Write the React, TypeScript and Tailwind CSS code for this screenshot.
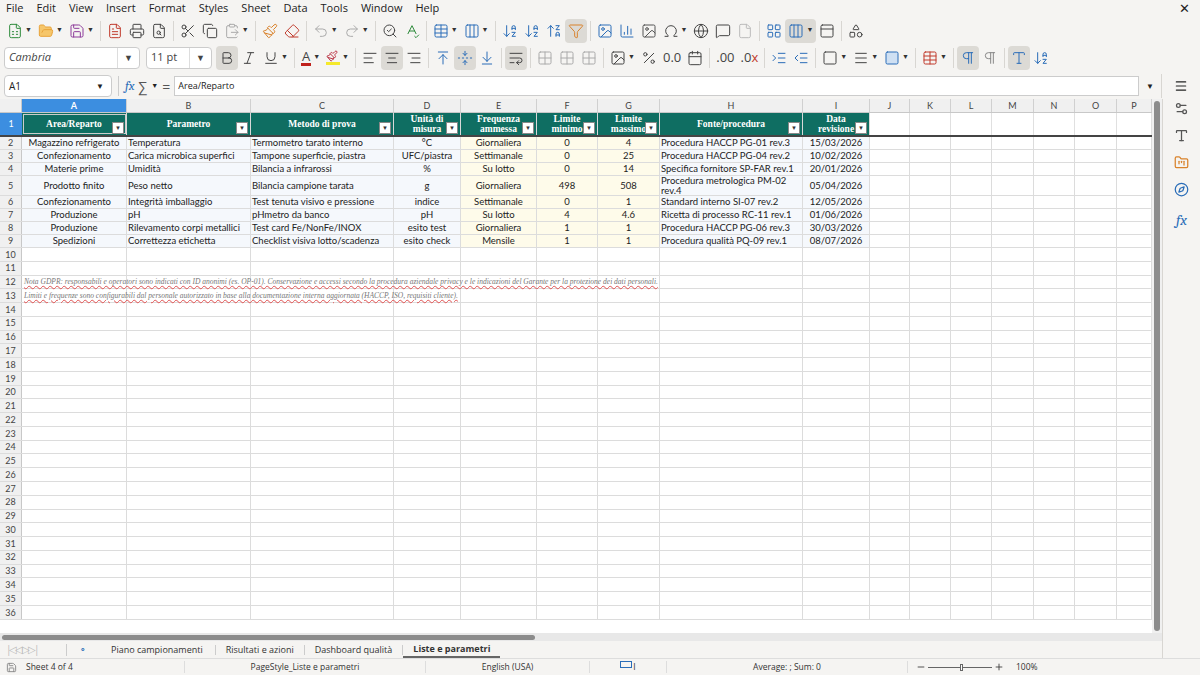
import React from "react";
import {
  FileSpreadsheet, FolderOpen, Save, FileText, Printer, FileSearch, Scissors, Copy, ClipboardPaste,
  Paintbrush, Eraser, Undo2, Redo2, SearchCheck, SpellCheck, Table, Columns3, ArrowDownAZ, ArrowUpZA,
  Filter, Image, BarChart3, Omega, Globe, MessageSquare, File, LayoutGrid, PanelTop, Shapes,
  Bold, Italic, Underline, AlignLeft, AlignCenter, AlignRight, ArrowUpToLine, FoldVertical, ArrowDownToLine,
  WrapText, Grid2x2, Percent, Calendar, IndentIncrease, IndentDecrease, Square, Menu, Settings2,
  Type, FolderKanban, Compass, ChevronDown, Pilcrow, Minus, Plus,
} from "lucide-react";

const COLS: [string, number][] = [
  ["A", 105], ["B", 124], ["C", 143], ["D", 67], ["E", 76], ["F", 61], ["G", 62], ["H", 143], ["I", 67],
  ["J", 40], ["K", 41], ["L", 41], ["M", 42], ["N", 41], ["O", 42], ["P", 35],
];

const HEAD = [
  ["Area/Reparto"], ["Parametro"], ["Metodo di prova"], ["Unità di", "misura"], ["Frequenza", "ammessa"],
  ["Limite", "minimo"], ["Limite", "massimo"], ["Fonte/procedura"], ["Data", "revisione"],
];

const DATA: { c: string[]; h: number }[] = [
  { c: ["Magazzino refrigerato", "Temperatura", "Termometro tarato interno", "°C", "Giornaliera", "0", "4", "Procedura HACCP PG-01 rev.3", "15/03/2026"], h: 14 },
  { c: ["Confezionamento", "Carica microbica superfici", "Tampone superficie, piastra", "UFC/piastra", "Settimanale", "0", "25", "Procedura HACCP PG-04 rev.2", "10/02/2026"], h: 14 },
  { c: ["Materie prime", "Umidità", "Bilancia a infrarossi", "%", "Su lotto", "0", "14", "Specifica fornitore SP-FAR rev.1", "20/01/2026"], h: 14 },
  { c: ["Prodotto finito", "Peso netto", "Bilancia campione tarata", "g", "Giornaliera", "498", "508", "Procedura metrologica PM-02 rev.4", "05/04/2026"], h: 21 },
  { c: ["Confezionamento", "Integrità imballaggio", "Test tenuta visivo e pressione", "indice", "Settimanale", "0", "1", "Standard interno SI-07 rev.2", "12/05/2026"], h: 14 },
  { c: ["Produzione", "pH", "pHmetro da banco", "pH", "Su lotto", "4", "4.6", "Ricetta di processo RC-11 rev.1", "01/06/2026"], h: 14 },
  { c: ["Produzione", "Rilevamento corpi metallici", "Test card Fe/NonFe/INOX", "esito test", "Giornaliera", "1", "1", "Procedura HACCP PG-06 rev.3", "30/03/2026"], h: 14 },
  { c: ["Spedizioni", "Correttezza etichetta", "Checklist visiva lotto/scadenza", "esito check", "Mensile", "1", "1", "Procedura qualità PQ-09 rev.1", "08/07/2026"], h: 14 },
];

const ui = { fontFamily: '"Open Sans", "Noto Sans", sans-serif' };
const cell = { fontFamily: '"Lato", "Liberation Sans", sans-serif' };

function Ic({ children, active, drop }: { children: React.ReactNode; active?: boolean; drop?: boolean }) {
  return (
    <div className={`flex items-center h-[24px] px-[3px] rounded ${active ? "bg-[#dcdad5]" : ""}`}>
      {children}
      {drop && <span className="ml-[2px] text-[7px] text-[#333]">▼</span>}
    </div>
  );
}
const Sep = () => <div className="w-px h-[20px] bg-[#d8d6d2] mx-[3px]" />;
const s = { size: 16, strokeWidth: 1.5 };

function DropBtn() {
  return <div className="w-[12px] h-[12px] bg-white border border-[#888] flex items-center justify-center text-[6px] text-[#333] shrink-0">▼</div>;
}

export default function App() {
  const alignOf = (i: number) => (i === 0 || i === 3 || i === 4 || i === 5 || i === 6 || i === 8 ? "justify-center text-center" : "justify-start");
  const bgOf = (i: number) => (i >= 4 && i <= 6 ? "bg-[#fefbea]" : "bg-[#f5f8fc]");
  const emptyRows = Array.from({ length: 27 }, (_, k) => k + 10);
  return (
    <div className="w-[1200px] h-[675px] bg-[#f5f4f2] flex flex-col overflow-hidden text-[#222]" style={ui}>
      {/* menu */}
      <div className="h-[17px] flex items-center gap-[13px] px-[6px] text-[11px]">
        {["File", "Edit", "View", "Insert", "Format", "Styles", "Sheet", "Data", "Tools", "Window", "Help"].map((m) => (
          <span key={m}>{m}</span>
        ))}
        <span className="ml-auto mr-[4px] text-[13px]">✕</span>
      </div>
      {/* toolbar 1 */}
      <div className="h-[27px] flex items-center px-[4px] text-[#444]">
        <Ic drop><FileSpreadsheet {...s} color="#2e8b3c" /></Ic>
        <Ic drop><FolderOpen {...s} color="#e8a33a" fill="#f6c66a" /></Ic>
        <Ic drop><Save {...s} color="#8c3a9a" /></Ic>
        <Sep />
        <Ic><FileText {...s} color="#c0392b" /></Ic>
        <Ic><Printer {...s} /></Ic>
        <Ic><FileSearch {...s} /></Ic>
        <Sep />
        <Ic><Scissors {...s} /></Ic>
        <Ic><Copy {...s} /></Ic>
        <Ic drop><ClipboardPaste {...s} color="#aaa" /></Ic>
        <Sep />
        <Ic><Paintbrush {...s} color="#d9822b" /></Ic>
        <Ic><Eraser {...s} color="#c0392b" /></Ic>
        <Sep />
        <Ic drop><Undo2 {...s} color="#aaa" /></Ic>
        <Ic drop><Redo2 {...s} color="#aaa" /></Ic>
        <Sep />
        <Ic><SearchCheck {...s} /></Ic>
        <Ic><SpellCheck {...s} color="#2e8b3c" /></Ic>
        <Sep />
        <Ic drop><Table {...s} color="#2a6db8" /></Ic>
        <Ic drop><Columns3 {...s} color="#2a6db8" /></Ic>
        <Sep />
        <Ic><ArrowDownAZ {...s} color="#2a6db8" /></Ic>
        <Ic><ArrowDownAZ {...s} color="#2a6db8" /></Ic>
        <Ic><ArrowUpZA {...s} color="#2a6db8" /></Ic>
        <Ic active><Filter {...s} color="#d9822b" /></Ic>
        <Sep />
        <Ic><Image {...s} color="#2a6db8" /></Ic>
        <Ic><BarChart3 {...s} color="#2a6db8" /></Ic>
        <Ic><Image {...s} color="#555" /></Ic>
        <Ic drop><Omega {...s} /></Ic>
        <Ic><Globe {...s} /></Ic>
        <Ic><MessageSquare {...s} /></Ic>
        <Ic><File {...s} color="#bbb" /></Ic>
        <Sep />
        <Ic><LayoutGrid {...s} color="#2a6db8" /></Ic>
        <Ic active drop><Columns3 {...s} color="#2a6db8" /></Ic>
        <Ic><PanelTop {...s} /></Ic>
        <Sep />
        <Ic><Shapes {...s} /></Ic>
      </div>
      {/* toolbar 2 */}
      <div className="h-[27px] flex items-center px-[4px] text-[#444]">
        <div className="w-[136px] h-[22px] bg-white border border-[#ccc] rounded-sm flex items-center text-[11px]">
          <span className="flex-1 px-[4px] italic">Cambria</span>
          <div className="w-[22px] h-full border-l border-[#ddd] flex items-center justify-center text-[9px]">▼</div>
        </div>
        <div className="w-[66px] h-[22px] ml-[6px] bg-white border border-[#ccc] rounded-sm flex items-center text-[11px]">
          <span className="flex-1 px-[4px]">11 pt</span>
          <div className="w-[22px] h-full border-l border-[#ddd] flex items-center justify-center text-[9px]">▼</div>
        </div>
        <div className="w-[4px]" />
        <Ic active><Bold {...s} /></Ic>
        <Ic><Italic {...s} /></Ic>
        <Ic drop><Underline {...s} /></Ic>
        <Sep />
        <Ic drop><span className="text-[13px] border-b-[3px] border-[#c0211c] leading-[14px] px-[1px]">A</span></Ic>
        <Ic drop><span className="w-[14px] h-[15px] border-b-[3px] border-[#f5e92b] flex items-center"><Paintbrush size={12} color="#b34" /></span></Ic>
        <Sep />
        <Ic><AlignLeft {...s} /></Ic>
        <Ic active><AlignCenter {...s} /></Ic>
        <Ic><AlignRight {...s} /></Ic>
        <Sep />
        <Ic><ArrowUpToLine {...s} color="#2a6db8" /></Ic>
        <Ic active><FoldVertical {...s} color="#2a6db8" /></Ic>
        <Ic><ArrowDownToLine {...s} color="#2a6db8" /></Ic>
        <Sep />
        <Ic active><WrapText {...s} /></Ic>
        <Sep />
        <Ic><Grid2x2 {...s} color="#aaa" /></Ic>
        <Ic><Grid2x2 {...s} color="#aaa" /></Ic>
        <Ic><Grid2x2 {...s} color="#aaa" /></Ic>
        <Sep />
        <Ic drop><Image {...s} /></Ic>
        <Ic><Percent {...s} /></Ic>
        <Ic><span className="text-[13px]">0.0</span></Ic>
        <Ic><Calendar {...s} /></Ic>
        <Sep />
        <Ic><span className="text-[13px]">.00</span></Ic>
        <Ic><span className="text-[13px]">.0<span className="text-[#c0392b]">x</span></span></Ic>
        <Sep />
        <Ic><IndentIncrease {...s} color="#2a6db8" /></Ic>
        <Ic><IndentDecrease {...s} color="#2a6db8" /></Ic>
        <Sep />
        <Ic drop><Square {...s} /></Ic>
        <Ic drop><Menu {...s} /></Ic>
        <Ic drop><Square {...s} color="#2a6db8" fill="#cfe0f3" /></Ic>
        <Sep />
        <Ic drop><Table {...s} color="#c0392b" /></Ic>
        <Sep />
        <Ic active><Pilcrow {...s} color="#2a6db8" /></Ic>
        <Ic><Pilcrow {...s} color="#888" /></Ic>
        <Sep />
        <Ic active><Type {...s} color="#2a6db8" /></Ic>
        <Ic><ArrowDownAZ {...s} color="#2a6db8" /></Ic>
      </div>
      {/* formula bar */}
      <div className="h-[28px] flex items-center px-[4px] gap-[4px] mt-[1px]">
        <div className="w-[108px] h-[22px] bg-white border border-[#ccc] rounded-sm flex items-center text-[10px]">
          <span className="flex-1 px-[4px]">A1</span>
          <div className="w-[22px] flex justify-center text-[8px]">▼</div>
        </div>
        <div className="w-px h-[20px] bg-[#ccc] mx-[2px]" />
        <span className="italic text-[#2a6db8] text-[13px] font-serif">fx</span>
        <span className="text-[14px] text-[#555]">∑</span><span className="text-[7px]">▼</span>
        <span className="text-[14px] text-[#555]">=</span>
        <div className="flex-1 h-[20px] bg-white border border-[#ccc] flex items-center px-[3px] text-[9px]">Area/Reparto</div>
        <span className="text-[8px] mx-[3px]">▼</span>
        <div className="w-px h-[24px] bg-[#d8d6d2]" />
        <div className="w-[30px] flex justify-center"><Menu size={14} /></div>
      </div>
      {/* main */}
      <div className="flex flex-1 min-h-0 mt-[-1px]">
        <div className="flex flex-col w-[1162px]">
          <div className="flex flex-1 min-h-0 bg-white">
            <div className="w-[1152px] overflow-hidden" style={cell}>
              {/* column headers */}
              <div className="flex h-[14px] bg-[#f0f0f0] border-b border-[#c8c8c8] text-[9px] text-[#444]">
                <div className="w-[22px] shrink-0 border-r border-[#c8c8c8]" />
                {COLS.map(([n, w], i) => (
                  <div key={n} style={{ width: w }} className={`shrink-0 flex items-center justify-center border-r border-[#d0d0d0] ${i === 0 ? "bg-[#3c8ee0] text-white font-bold" : ""}`}>{n}</div>
                ))}
              </div>
              {/* row 1 */}
              <div className="flex h-[24px] border-b-2 border-[#444]">
                <div className="w-[22px] shrink-0 bg-[#3c8ee0] text-white text-[9px] flex items-center justify-center">1</div>
                {COLS.map(([n, w], i) =>
                  i < 9 ? (
                    <div key={n} style={{ width: w, fontFamily: '"Liberation Serif", "DejaVu Serif", serif' }} className={`shrink-0 bg-[#0f6e62] text-white font-bold text-[9.5px] leading-[10px] flex items-center justify-center relative border-r border-[#d8d8d8] ${i === 0 ? "outline outline-1 outline-[#ccc] -outline-offset-2" : ""}`}>
                      <div className="text-center pb-[1px]">{HEAD[i].map((l) => <div key={l}>{l}</div>)}</div>
                      <div className="absolute right-[2px] bottom-[1px]"><DropBtn /></div>
                    </div>
                  ) : (
                    <div key={n} style={{ width: w }} className="shrink-0 border-r border-[#e0e0e0]" />
                  )
                )}
              </div>
              {DATA.map((r, ri) => (
                <div key={ri} className="flex border-b border-[#dcdcdc]" style={{ height: r.h - 1 }}>
                  <div className="w-[22px] shrink-0 bg-[#f0f0f0] border-r border-[#c8c8c8] text-[9px] text-[#444] flex items-center justify-center">{ri + 2}</div>
                  {COLS.map(([n, w], i) => (
                    <div key={n} style={{ width: w }} className={`shrink-0 border-r border-[#dcdcdc] flex items-center px-[1px] text-[9.5px] leading-[10px] overflow-hidden whitespace-nowrap ${i < 9 ? bgOf(i) + " " + alignOf(i) : ""}`}>
                      {i < 9 && (i === 7 && ri === 3 ? <span className="whitespace-normal">{r.c[i]}</span> : r.c[i])}
                    </div>
                  ))}
                </div>
              ))}
              {emptyRows.map((rn) => (
                <div key={rn} className="flex h-[13.77px] border-b border-[#dcdcdc] relative">
                  <div className="w-[22px] shrink-0 bg-[#f0f0f0] border-r border-[#c8c8c8] text-[9px] text-[#444] flex items-center justify-center">{rn}</div>
                  {COLS.map(([n, w]) => (
                    <div key={n} style={{ width: w }} className="shrink-0 border-r border-[#dcdcdc]" />
                  ))}
                  {(rn === 12 || rn === 13) && (
                    <div className="absolute left-[24px] top-0 h-full flex items-center italic text-[7.5px] text-[#777] whitespace-nowrap underline decoration-[#e05050] decoration-wavy" style={{ fontFamily: '"Liberation Serif", serif' }}>
                      {rn === 12
                        ? "Nota GDPR: responsabili e operatori sono indicati con ID anonimi (es. OP-01). Conservazione e accessi secondo la procedura aziendale privacy e le indicazioni del Garante per la protezione dei dati personali."
                        : "Limiti e frequenze sono configurabili dal personale autorizzato in base alla documentazione interna aggiornata (HACCP, ISO, requisiti cliente)."}
                    </div>
                  )}
                </div>
              ))}
            </div>
            <div className="w-[10px] bg-[#f0f0f0] flex justify-center pt-[2px]">
              <div className="w-[6px] h-[530px] bg-[#8c8c8c] rounded" />
            </div>
          </div>
          {/* h scroll */}
          <div className="h-[8px] bg-[#e8e8e8] flex items-center">
            <div className="ml-[2px] w-[533px] h-[5px] bg-[#8c8c8c] rounded" />
          </div>
          {/* tabs */}
          <div className="h-[17px] flex items-center text-[9px] text-[#333] bg-[#f5f4f2]">
            <span className="text-[#bbb] text-[10px] tracking-[-2px] w-[66px] pl-[6px]">|◁◁ ▷▷|</span>
            <div className="w-px h-[12px] bg-[#ccc]" />
            <span className="text-[#2a6db8] text-[9px] px-[12px]">⚬</span>
            <span className="px-[12px]">Piano campionamenti</span>
            <div className="w-px h-[10px] bg-[#ccc]" />
            <span className="px-[10px]">Risultati e azioni</span>
            <div className="w-px h-[10px] bg-[#ccc]" />
            <span className="px-[10px]">Dashboard qualità</span>
            <div className="w-px h-[10px] bg-[#ccc]" />
            <span className="px-[10px] font-bold border-b-2 border-[#666] h-full flex items-center">Liste e parametri</span>
          </div>
        </div>
        {/* sidebar */}
        <div className="w-[38px] border-l border-[#d8d6d2] flex flex-col items-center gap-[12px] pt-[-30px]">
          <div className="mt-[-10px]" />
          <Settings2 size={15} color="#555" />
          <Type size={15} color="#555" />
          <FolderKanban size={15} color="#d9822b" />
          <Compass size={15} color="#2a6db8" />
          <span className="italic font-serif text-[15px] text-[#2a6db8]">fx</span>
        </div>
      </div>
      {/* status bar */}
      <div className="h-[17px] flex items-center text-[8.5px] text-[#333] border-t border-[#ddd]">
        <div className="w-[22px] flex justify-center"><Save size={11} color="#888" /></div>
        <span className="w-[162px] pl-[4px]">Sheet 4 of 4</span>
        <div className="w-px h-[12px] bg-[#ddd]" />
        <span className="w-[240px] text-center">PageStyle_Liste e parametri</span>
        <div className="w-px h-[12px] bg-[#ddd]" />
        <span className="w-[163px] text-center">English (USA)</span>
        <div className="w-px h-[12px] bg-[#ddd]" />
        <span className="w-[76px] flex justify-center"><span className="w-[12px] h-[7px] border border-[#2a6db8]" /><span className="ml-[1px]">I</span></span>
        <div className="w-px h-[12px] bg-[#ddd]" />
        <span className="w-[240px] text-center">Average: ; Sum: 0</span>
        <div className="w-px h-[12px] bg-[#ddd]" />
        <div className="flex items-center gap-[2px] ml-[8px]">
          <Minus size={10} />
          <div className="w-[64px] h-px bg-[#666] relative"><div className="absolute left-[32px] top-[-3px] w-[3px] h-[7px] border border-[#666] bg-white" /></div>
          <Plus size={10} />
        </div>
        <span className="ml-[12px]">100%</span>
      </div>
    </div>
  );
}
